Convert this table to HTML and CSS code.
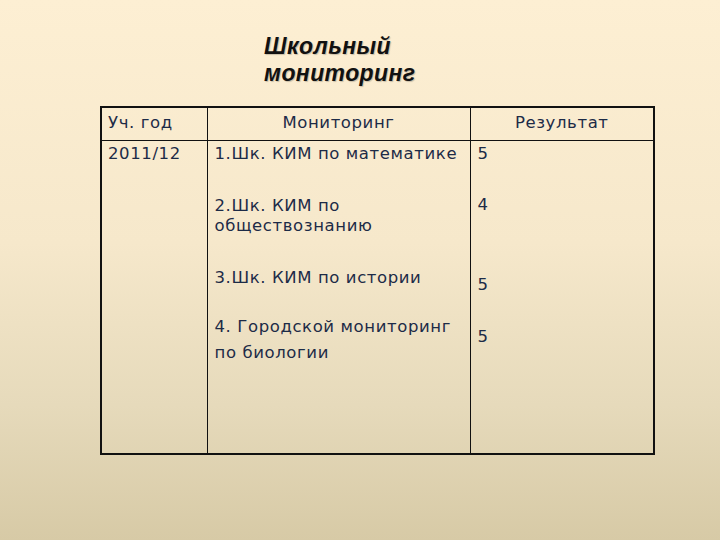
FILE: index.html
```html
<!DOCTYPE html>
<html lang="ru">
<head>
<meta charset="utf-8">
<link rel="stylesheet" href="styles.css">
</head>
<body>
<div class="slide">
  <h1 class="title">Школьный<br>мониторинг</h1>
  <table class="grid">
    <colgroup>
      <col class="w1">
      <col class="w2">
      <col class="w3">
    </colgroup>
    <thead>
      <tr>
        <th class="c1">Уч. год</th>
        <th class="c2">Мониторинг</th>
        <th class="c3">Результат</th>
      </tr>
    </thead>
    <tbody>
      <tr>
        <td class="c1">2011/12</td>
        <td class="c2">
          <p class="item i1">1.Шк. КИМ по математике</p>
          <p class="item i2">2.Шк. КИМ по<br>обществознанию</p>
          <p class="item i3">3.Шк. КИМ по истории</p>
          <p class="item i4">4. Городской мониторинг<br>по биологии</p>
        </td>
        <td class="c3">
          <p class="mark m1">5</p>
          <p class="mark m2">4</p>
          <p class="mark m3">5</p>
          <p class="mark m4">5</p>
        </td>
      </tr>
    </tbody>
  </table>
</div>
</body>
</html>
```
FILE: styles.css
```css
html, body {
  margin: 0;
  padding: 0;
}
body {
  width: 720px;
  height: 540px;
  background: linear-gradient(to bottom, #fdefd3 0%, #f6e8cb 45%, #e6dabb 75%, #d7caa6 100%);
  overflow: hidden;
}
.slide {
  padding-top: 33px;
  padding-left: 100px;
}
.title {
  margin: 0 0 0 164px;
  font-family: "Liberation Sans", Arial, sans-serif;
  font-weight: bold;
  font-style: italic;
  font-size: 23px;
  letter-spacing: 0.4px;
  line-height: 27px;
  color: #111;
  text-shadow: 1px 1px 1px rgba(0,0,0,0.2);
}
.grid {
  margin-top: 19px;
  border-collapse: collapse;
  table-layout: fixed;
  border: 2px solid #111;
  font-family: "DejaVu Sans", Verdana, sans-serif;
  font-size: 16.5px;
  letter-spacing: 0.6px;
  color: #1d2b47;
  width: 553px;
}
.w1 { width: 106px; }
.w2 { width: 263px; }
.w3 { width: 184px; }
.grid th, .grid td {
  border-left: 1px solid #111;
  border-right: 1px solid #111;
  padding: 0;
  vertical-align: top;
  white-space: nowrap;
}
.grid th {
  font-weight: normal;
  height: 33px;
  line-height: 20px;
  padding-top: 5px;
  box-sizing: border-box;
  border-bottom: 1px solid #111;
}
.grid th.c1 { text-align: left; padding-left: 6px; }
.grid td {
  height: 309px;
  line-height: 20px;
  padding-top: 3px;
}
.grid td.c1 { padding-left: 6px; }
.grid td.c2 { padding-left: 7px; }
.grid td.c3 { padding-left: 7px; }
.item, .mark {
  margin: 0;
}
.i2 { margin-top: 32px; }
.i3 { margin-top: 32px; }
.i4 { margin-top: 26px; line-height: 26px; }
.m2 { margin-top: 31px; }
.m3 { margin-top: 60px; }
.m4 { margin-top: 32px; }
```
